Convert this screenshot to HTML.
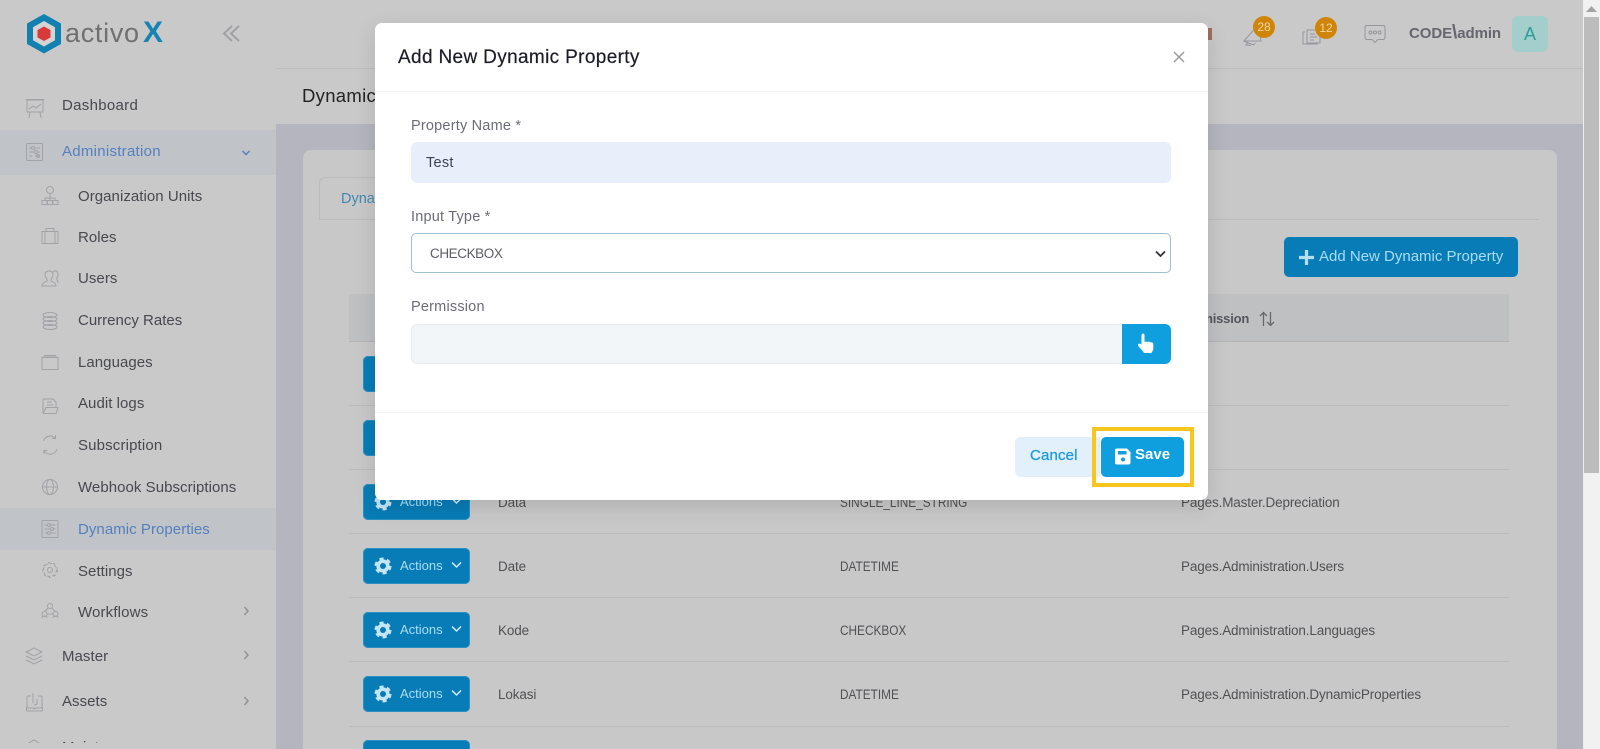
<!DOCTYPE html>
<html lang="en"><head><meta charset="utf-8"><title>Add New Dynamic Property</title>
<style>
html,body{margin:0;padding:0;width:1600px;height:749px;overflow:hidden;background:#b4b5be;font-family:"Liberation Sans",sans-serif}
#p{position:relative;width:1600px;height:749px;overflow:hidden;background:#b4b5be}
.a{position:absolute}
.t{position:absolute;white-space:nowrap;line-height:20px;height:20px;margin-top:1px}
.s{font-size:15px;color:#484850;letter-spacing:.05px;margin-top:2px}
.blue{color:#5580bd}
.r{font-size:13.5px;color:#515155;letter-spacing:-.14px;margin-top:0}
.c{display:inline-block;transform:scaleX(.875);transform-origin:0 50%;letter-spacing:0}
.b{position:absolute;left:363px;width:107px;height:36px;background:#087cb6;border-radius:5px;box-shadow:0 0 0 1px #2a90c4 inset}
.b span{position:absolute;left:37px;top:9px;font-size:13px;line-height:18px;color:#a9dcf4}
.b svg{position:absolute}
.ln{position:absolute;left:349px;width:1160px;height:1px;background:#bbb}
.l{position:absolute;font-size:14.5px;line-height:20px;color:#6c6c78;white-space:nowrap;letter-spacing:.2px;margin-top:1px}
svg{display:block}
</style></head><body><div id="p">
<!-- page areas -->
<div class="a" style="left:0;top:0;width:276px;height:749px;background:#c9c9c9"></div>
<div class="a" style="left:276px;top:0;width:1307px;height:68px;background:#c9c9c9;border-bottom:1px solid #bdbdbd"></div>
<div class="a" style="left:276px;top:69px;width:1307px;height:55px;background:#c9c9c9"></div>
<div class="a" style="left:303px;top:150px;width:1254px;height:600px;background:#c8c8c8;border-radius:8px 8px 0 0"></div>

<!-- logo -->
<svg class="a" style="left:24px;top:12px" width="40" height="44" viewBox="0 0 40 44"><polygon points="20,2 37,11.5 37,32 20,41.5 3,32 3,11.5" fill="#1281b0"/><polygon points="20,9 31,15.2 31,28.2 20,34.5 9,28.2 9,15.2" fill="#d4d4d4"/><polygon points="20,14.5 26.500,18 26.500,25.500 20,29 13.500,25.500 13.500,18" fill="#d83a3c"/></svg>
<div class="t" style="left:65px;top:13px;margin:0;font-size:27px;line-height:40px;height:40px;color:#707070;letter-spacing:.7px">activo</div>
<div class="t" style="left:143px;top:13px;margin:0;font-size:30px;line-height:40px;height:40px;color:#1583b3;font-weight:bold">X</div>
<svg class="a" style="left:221px;top:24px" width="20" height="19" viewBox="0 0 20 19" fill="none" stroke="#a0a0a5" stroke-width="2"><path d="M11 2 3 9.500 11 17M18 2 10 9.500 18 17"/></svg>

<!-- sidebar -->
<div class="a" style="left:0;top:130px;width:276px;height:45px;background:#c0c4c8"></div>
<div class="a" style="left:0;top:508px;width:276px;height:42px;background:#c0c4c8"></div>
<div class="a" style="left:0;top:0;width:276px;height:743px;overflow:hidden">
<div class="t s" style="left:62px;top:94px;letter-spacing:.3px">Dashboard</div>
<div class="t s blue" style="left:62px;top:140px;letter-spacing:.27px">Administration</div>
<div class="t s" style="left:78px;top:185px">Organization Units</div>
<div class="t s" style="left:78px;top:226px">Roles</div>
<div class="t s" style="left:78px;top:267px">Users</div>
<div class="t s" style="left:78px;top:309px;letter-spacing:0">Currency Rates</div>
<div class="t s" style="left:78px;top:351px">Languages</div>
<div class="t s" style="left:78px;top:392px">Audit logs</div>
<div class="t s" style="left:78px;top:434px;letter-spacing:.15px">Subscription</div>
<div class="t s" style="left:78px;top:476px">Webhook Subscriptions</div>
<div class="t s blue" style="left:78px;top:518px">Dynamic Properties</div>
<div class="t s" style="left:78px;top:560px">Settings</div>
<div class="t s" style="left:78px;top:601px;letter-spacing:.15px">Workflows</div>
<div class="t s" style="left:62px;top:645px">Master</div>
<div class="t s" style="left:62px;top:690px">Assets</div>
<div class="t s" style="left:62px;top:736px">Maintenance</div>
<svg class="a" style="left:0;top:0" width="276" height="743" viewBox="0 0 276 743" fill="none" stroke="#a2a2a7" stroke-width="1">
<path d="M27 100h16v12H27zM25.500 99.500h19M29 118l1-6M41 118l-1-6M29 109l4-3 3 2 5-4"/>
<rect x="26.500" y="143.500" width="16" height="17" rx="1"/><path d="M29 148h3m3 0h5M29 152h6m3 0h2M29 156h3m3 0h5"/><circle cx="33" cy="148" r="1.500"/><circle cx="36" cy="152" r="1.500"/><circle cx="38" cy="156" r="1.500"/>
<circle cx="50" cy="190" r="3.500"/><path d="M50 194v4M45 198h10M45 198v2M50 198v2M55 198v2"/><rect x="42" y="200.500" width="5" height="4"/><rect x="47.500" y="200.500" width="5" height="4"/><rect x="53" y="200.500" width="5" height="4"/>
<rect x="42" y="231.500" width="16" height="12"/><path d="M46 231v-2.500h8v2.500M45 232v11M55 232v11"/>
<path d="M42 286c0-4 4-4 5-5 1-2-2-3-2-6 0-3 2-4 4-4s4 1 4 4c0 3-3 4-2 6 1 1 5 1 5 5zM53 272c2-2 5-1 5 2s-2 4-1 6c1 1 1 1 1 3"/>
<ellipse cx="50" cy="315" rx="7" ry="2.500"/><ellipse cx="50" cy="319" rx="7" ry="2.500"/><ellipse cx="50" cy="323" rx="7" ry="2.500"/><ellipse cx="50" cy="327" rx="7" ry="2.500"/>
<rect x="42" y="357.500" width="16" height="12"/><path d="M44 355.500h12M43 357h14"/>
<path d="M43 413v-13q0-1 1-1h9l3 3v6M43 413q0 .500 1 .500h12l2-6H46l-3 6M47 402h5M47 405h6"/>
<path d="M43.500 441a7 7 0 0 1 12-2.500M57 449a7 7 0 0 1-13 1.500M55.500 435v3.500H52M44 454v-3.500h3.500"/>
<circle cx="50" cy="487" r="7.500"/><ellipse cx="50" cy="487" rx="3.500" ry="7.500"/><path d="M42.500 487h15"/>
<rect x="42" y="520.500" width="16" height="17" rx="1"/><path d="M44.500 525h3m3 0h5M44.500 529h6m3 0h2M44.500 533h3m3 0h5"/><circle cx="49" cy="525" r="1.500"/><circle cx="52" cy="529" r="1.500"/><circle cx="49" cy="533" r="1.500"/>
<circle cx="50" cy="570" r="2.500"/><circle cx="50" cy="570" r="6.500" stroke-dasharray="3 2"/><circle cx="50" cy="570" r="7.500" stroke-dasharray="2 3.500"/>
<circle cx="50" cy="606" r="2.500"/><circle cx="44.500" cy="614" r="2.500"/><circle cx="55.500" cy="614" r="2.500"/><path d="M48 608l-3 3.500M52 608l3 3.500M42 618c0-2 1-2 2.500-2s2.500 0 2.500 2M53 618c0-2 1-2 2.500-2s2.500 0 2.500 2M47 614h6"/>
<path d="M34 648l8 4-8 4-8-4zM26 656l8 4 8-4M26 660l8 4 8-4"/>
<path d="M27 696h4M38 696h4M27 696v12M42 696v12M26.500 708v2q0 1 1 1h14q1 0 1-1v-2h-7l-1 1-1-1zM33 693v10M37 699v4q0 2-3 2"/>
<path d="M27 744l7-4 7 4"/>
</svg>
<svg class="a" style="left:0;top:0" width="276" height="743" fill="none" stroke="#929298" stroke-width="1.500"><path d="M242.500 151l3.500 3.500 3.500-3.500" stroke="#5580bd"/><path d="M244.500 607l3.500 4-3.500 4M244.500 651l3.500 4-3.500 4M244.500 697l3.500 4-3.500 4"/></svg>
</div>

<!-- top bar -->
<div class="a" style="left:1208px;top:28px;width:4px;height:12px;background:#a36c5b"></div>
<svg class="a" style="left:1240px;top:22px" width="100" height="26" viewBox="0 0 100 26" fill="none" stroke="#97979e" stroke-width="1"><path d="M4 19l14-16 3 16zM3.500 19l10 4 2-2M8 21l-2 2 5 .500M65 10h-2v12h14v-2"/><rect x="67" y="8" width="13" height="13"/><path d="M70 12h5M70 15h7M70 18h4"/></svg>
<div class="a" style="left:1253px;top:16px;width:22px;height:22px;border-radius:50%;background:#d08508;color:#f0d5a5;font-size:12px;line-height:22px;text-align:center">28</div>
<div class="a" style="left:1315px;top:17px;width:22px;height:22px;border-radius:50%;background:#d08508;color:#f0d5a5;font-size:12px;line-height:22px;text-align:center">12</div>
<svg class="a" style="left:1364px;top:24px" width="22" height="20" viewBox="0 0 22 20" fill="none" stroke="#97979e"><path d="M3 1.500h16q2 0 2 2v10q0 2-2 2h-5l-3 3-3-3H3q-2 0-2-2v-10q0-2 2-2z"/><circle cx="6.500" cy="8.500" r="1.500"/><circle cx="11" cy="8.500" r="1.500"/><circle cx="15.500" cy="8.500" r="1.500"/></svg>
<div class="t" style="left:1409px;top:22px;margin-top:1px;font-size:15px;font-weight:bold;color:#66666f;letter-spacing:-.08px">CODE<span style="font-size:19px;margin:0 0">\</span>admin</div>
<div class="a" style="left:1512px;top:16px;width:36px;height:36px;background:#a4cecb;border-radius:6px;color:#2f9c97;font-size:18px;line-height:36px;text-align:center">A</div>
<div class="t" style="left:302px;top:85px;font-size:18.500px;color:#232326;letter-spacing:.3px">Dynamic Properties</div>

<!-- card content -->
<div class="a" style="left:319px;top:177px;width:110px;height:43px;border:1px solid #bbb;border-bottom:0;border-radius:6px 6px 0 0;box-sizing:border-box"></div>
<div class="t" style="left:341px;top:188px;font-size:14.500px;color:#4388b4">Dynamic Properties</div>
<div class="a" style="left:319px;top:219px;width:1220px;height:1px;background:#bbb"></div>
<div class="a" style="left:1284px;top:237px;width:234px;height:40px;background:#087cb6;border-radius:5px"></div>
<svg class="a" style="left:1298px;top:249px" width="17" height="17"><path d="M8.500 1v15M1 8.500h15" stroke="#b3def3" stroke-width="3.200"/></svg>
<div class="t" style="left:1319px;top:246px;margin-top:1px;font-size:15px;color:#a9dcf4">Add New Dynamic Property</div>

<div class="a" style="left:349px;top:294px;width:1160px;height:48px;background:#bfc0c2;border-bottom:1px solid #b3b3b3;box-sizing:border-box"></div>
<div class="t" style="left:1181px;top:308px;font-size:13px;font-weight:bold;color:#55555c;letter-spacing:-.2px">Permission</div>
<svg class="a" style="left:1259px;top:311px" width="16" height="16" fill="none" stroke="#67676d" stroke-width="1.300"><path d="M4.500 15V1.500M1 5l3.500-3.500L8 5M11.500 1v13.500M8 11l3.500 3.500L15 11"/></svg>
<div class="ln" style="top:405px"></div><div class="ln" style="top:469px"></div><div class="ln" style="top:533px"></div><div class="ln" style="top:597px"></div><div class="ln" style="top:661px"></div><div class="ln" style="top:726px"></div>

<svg width="0" height="0" style="position:absolute"><defs><g id="g"><circle cx="9" cy="9" r="4.800" fill="none" stroke="#c3e6f7" stroke-width="3.600"/><circle cx="9" cy="9" r="7.400" fill="none" stroke="#c3e6f7" stroke-width="2.200" stroke-dasharray="4.200 3.550"/></g></defs></svg>
<div class="b" style="top:356px"></div>
<div class="b" style="top:420px"></div>
<div class="b" style="top:484px"><svg style="left:11px;top:9px" width="18" height="18"><use href="#g"/></svg><span>Actions</span><svg style="left:88px;top:13px" width="11" height="8" fill="none" stroke="#d2edf9" stroke-width="1.500"><path d="M1 1.500l4.500 4.500L10 1.500"/></svg></div>
<div class="b" style="top:548px"><svg style="left:11px;top:9px" width="18" height="18"><use href="#g"/></svg><span>Actions</span><svg style="left:88px;top:13px" width="11" height="8" fill="none" stroke="#d2edf9" stroke-width="1.500"><path d="M1 1.500l4.500 4.500L10 1.500"/></svg></div>
<div class="b" style="top:612px"><svg style="left:11px;top:9px" width="18" height="18"><use href="#g"/></svg><span>Actions</span><svg style="left:88px;top:13px" width="11" height="8" fill="none" stroke="#d2edf9" stroke-width="1.500"><path d="M1 1.500l4.500 4.500L10 1.500"/></svg></div>
<div class="b" style="top:676px"><svg style="left:11px;top:9px" width="18" height="18"><use href="#g"/></svg><span>Actions</span><svg style="left:88px;top:13px" width="11" height="8" fill="none" stroke="#d2edf9" stroke-width="1.500"><path d="M1 1.500l4.500 4.500L10 1.500"/></svg></div>
<div class="b" style="top:740px"></div>

<div class="t r" style="left:498px;top:493px">Data</div><div class="t r" style="left:840px;top:493px"><span class="c">SINGLE_LINE_STRING</span></div><div class="t r" style="left:1181px;top:493px">Pages.Master.Depreciation</div>
<div class="t r" style="left:498px;top:557px">Date</div><div class="t r" style="left:840px;top:557px"><span class="c">DATETIME</span></div><div class="t r" style="left:1181px;top:557px">Pages.Administration.Users</div>
<div class="t r" style="left:498px;top:621px">Kode</div><div class="t r" style="left:840px;top:621px"><span class="c">CHECKBOX</span></div><div class="t r" style="left:1181px;top:621px">Pages.Administration.Languages</div>
<div class="t r" style="left:498px;top:685px">Lokasi</div><div class="t r" style="left:840px;top:685px"><span class="c">DATETIME</span></div><div class="t r" style="left:1181px;top:685px">Pages.Administration.DynamicProperties</div>

<!-- modal -->
<div class="a" style="left:375px;top:23px;width:833px;height:477px;background:#fff;border-radius:7px;box-shadow:0 6px 22px rgba(0,0,0,.12)"></div>
<div class="a" style="left:375px;top:91px;width:833px;height:1px;background:#eff1f4"></div>
<div class="a" style="left:375px;top:412px;width:833px;height:1px;background:#eff1f4"></div>
<div class="t" style="left:398px;top:47px;font-size:19px;color:#1c1c28;letter-spacing:.35px;-webkit-text-stroke:.2px #1c1c28">Add New Dynamic Property</div>
<svg class="a" style="left:1173px;top:51px" width="12" height="12"><path d="M1 1l10 10M11 1L1 11" stroke="#97979c" stroke-width="1.400"/></svg>

<div class="l" style="left:411px;top:115px">Property Name *</div>
<div class="a" style="left:411px;top:142px;width:760px;height:41px;background:#e8effb;border-radius:6px"></div>
<div class="t" style="left:426px;top:152px;font-size:14.500px;color:#3f4254;letter-spacing:.25px">Test</div>

<div class="l" style="left:411px;top:206px">Input Type *</div>
<div class="a" style="left:411px;top:233px;width:760px;height:40px;box-sizing:border-box;border:1px solid #a2bfd2;border-radius:5px;background:#fff"></div>
<div class="t" style="left:430px;top:243px;font-size:13.500px;color:#5d5d66;letter-spacing:-.42px">CHECKBOX</div>
<svg class="a" style="left:1155px;top:250px" width="11" height="8" fill="none" stroke="#33333a" stroke-width="1.800"><path d="M1 1.500l4.500 4.500L10 1.500"/></svg>

<div class="l" style="left:411px;top:296px">Permission</div>
<div class="a" style="left:411px;top:324px;width:711px;height:40px;box-sizing:border-box;background:#f3f6f9;border:1px solid #e9edf1;border-right:0;border-radius:6px 0 0 6px"></div>
<div class="a" style="left:1122px;top:324px;width:49px;height:40px;background:#0f9fdf;border-radius:0 6px 6px 0"></div>
<svg class="a" style="left:1137px;top:333px" width="18" height="22" viewBox="0 0 18 22"><path d="M4.500 2.500q0-2 1.500-2t1.500 2v6.500q1.800-1 3 0 1.600-.8 2.800.4 2.400-.6 3 1.600v4.500q0 2-2 4.500H7q-1.500-2.500-5-6-1.800-2-.6-3 1.300-1 3.100.8z" fill="#fff"/></svg>

<div class="a" style="left:1015px;top:437px;width:85px;height:40px;background:#e1f0fb;border-radius:6px 0 0 6px"></div>
<div class="t" style="left:1030px;top:445px;margin-top:1px;font-size:15px;color:#1f9bdc;letter-spacing:.15px;-webkit-text-stroke:.3px #1f9bdc">Cancel</div>
<div class="a" style="left:1092px;top:427px;width:102px;height:60px;box-sizing:border-box;border:4px solid #f9c61f"></div>
<div class="a" style="left:1101px;top:437px;width:83px;height:40px;background:#0f9fdf;border-radius:5px"></div>
<svg class="a" style="left:1115px;top:448px" width="16" height="17" viewBox="0 0 16 17"><path d="M2 .500h10l3.500 3.500v10.500q0 2-2 2H2q-2 0-2-2v-12q0-2 2-2z" fill="#fff"/><rect x="3" y="3" width="8.500" height="3.500" fill="#0f9fdf"/><circle cx="8" cy="11.500" r="2" fill="#0f9fdf"/></svg>
<div class="t" style="left:1135px;top:444px;margin-top:1px;font-size:15px;font-weight:bold;color:#fff">Save</div>

<!-- scrollbar -->
<div class="a" style="left:1583px;top:0;width:17px;height:749px;background:#f1f1f1;border-left:1px solid #eee;box-sizing:border-box"></div>
<div class="a" style="left:1584px;top:17px;width:15px;height:456px;background:#bcbcbc"></div>
<svg class="a" style="left:1586px;top:6px" width="11" height="6"><path d="M5.500 0L11 6H0z" fill="#a3a3a3"/></svg>
</div></body></html>
